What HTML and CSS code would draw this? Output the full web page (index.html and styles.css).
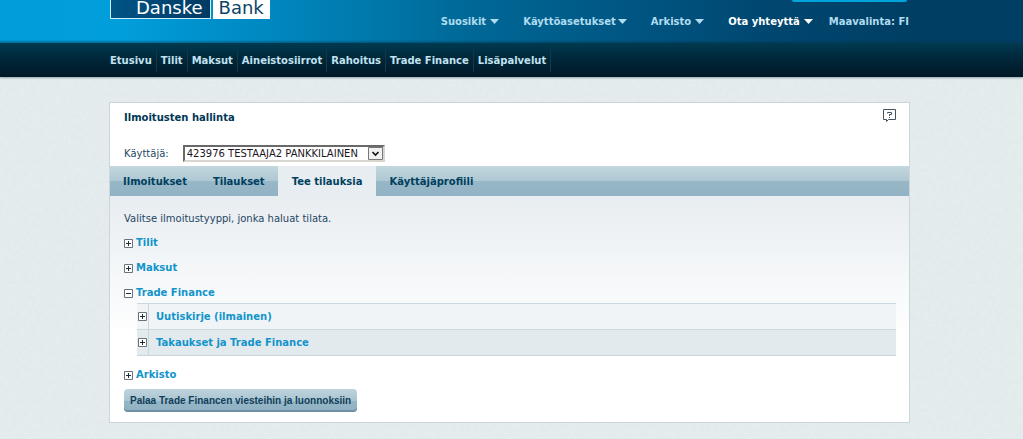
FILE: index.html
```html
<!DOCTYPE html>
<html lang="fi">
<head>
<meta charset="utf-8">
<title>Ilmoitusten hallinta</title>
<link rel="stylesheet" href="styles.css">
</head>
<body>
<svg class="sprite" width="0" height="0" aria-hidden="true">
  <symbol id="plus" viewBox="0 0 9 9"><path fill="#fff" stroke="#66737d" d="M.5.5h8v8h-8z"/><path stroke="#222b33" d="M2 4.500h5M4.500 2v5"/></symbol>
  <symbol id="minus" viewBox="0 0 9 9"><path fill="#fff" stroke="#66737d" d="M.5.5h8v8h-8z"/><path stroke="#222b33" d="M2 4.500h5"/></symbol>
  <symbol id="down" viewBox="0 0 9 5"><path d="M0 0h9L4.500 5z" fill="currentColor"/></symbol>
</svg>
<header class="top">
  <a class="logo" href="#"><span class="logo-danske">Danske</span><span class="logo-bank">Bank</span></a>
  <div class="logout"></div>
  <nav class="tools">
    <button class="tool">Suosikit<svg class="caret"><use href="#down"/></svg></button>
    <button class="tool tool-tight">Käyttöasetukset<svg class="caret"><use href="#down"/></svg></button>
    <button class="tool">Arkisto<svg class="caret"><use href="#down"/></svg></button>
    <button class="tool tool-active">Ota yhteyttä<svg class="caret"><use href="#down"/></svg></button>
    <button class="tool">Maavalinta: FI</button>
  </nav>
</header>
<nav class="menu">
  <a href="#">Etusivu</a><a href="#">Tilit</a><a href="#">Maksut</a><a href="#">Aineistosiirrot</a><a href="#">Rahoitus</a><a href="#">Trade Finance</a><a href="#">Lisäpalvelut</a>
</nav>
<main class="page">
  <section class="panel">
    <div class="panel-head">
      <h1>Ilmoitusten hallinta</h1>
      <button class="help" aria-label="Ohje">
        <svg width="13" height="13" viewBox="0 0 13 13" fill="none" stroke="#46535f"><path d="M.5.5h12v10H5.500L3.500 12.500V10.500H.5z"/><path d="M4.500 4.500v-1h4v2h-2v1.500M6 8.500h1"/></svg>
      </button>
    </div>
    <div class="user">
      <label for="user">Käyttäjä:</label>
      <span class="picker">
        <select id="user"><option>423976 TESTAAJA2 PANKKILAINEN</option></select>
        <svg class="picker-arrow" viewBox="0 0 15 13"><path d="M.5.5h14v12H.5z" fill="#f1f1f1" stroke="#777"/><path d="M4.500 5l3 3 3-3" fill="none" stroke="#111" stroke-width="1.600"/></svg>
      </span>
    </div>
    <nav class="tabs">
      <a href="#">Ilmoitukset</a><a href="#">Tilaukset</a><a class="current" href="#">Tee tilauksia</a><a href="#">Käyttäjäprofiili</a>
    </nav>
    <div class="content">
      <p>Valitse ilmoitustyyppi, jonka haluat tilata.</p>
      <ul class="tree">
        <li><button class="node"><svg class="box"><use href="#plus"/></svg>Tilit</button></li>
        <li><button class="node"><svg class="box"><use href="#plus"/></svg>Maksut</button></li>
        <li><button class="node"><svg class="box"><use href="#minus"/></svg>Trade Finance</button>
          <ul class="rows">
            <li><button class="row"><span class="row-icon"><svg class="box"><use href="#plus"/></svg></span>Uutiskirje (ilmainen)</button></li>
            <li><button class="row"><span class="row-icon"><svg class="box"><use href="#plus"/></svg></span>Takaukset ja Trade Finance</button></li>
          </ul>
        </li>
        <li><button class="node"><svg class="box"><use href="#plus"/></svg>Arkisto</button></li>
      </ul>
      <button class="back">Palaa Trade Financen viesteihin ja luonnoksiin</button>
    </div>
  </section>
</main>
</body>
</html>
```
FILE: styles.css
```css
* { box-sizing: border-box; }
body {
  margin: 0;
  background: #e2eaec url("data:image/svg+xml,%3Csvg xmlns='http://www.w3.org/2000/svg' width='240' height='240'%3E%3Cfilter id='n'%3E%3CfeTurbulence type='fractalNoise' baseFrequency='.25' numOctaves='3' stitchTiles='stitch'/%3E%3CfeColorMatrix values='0 0 0 0 1 0 0 0 0 1 0 0 0 0 1 .7 0 0 0 -.2'/%3E%3C/filter%3E%3Crect width='240' height='240' filter='url(%23n)' opacity='.4'/%3E%3C/svg%3E");
  font: 10px/16px "DejaVu Sans", Verdana, sans-serif;
  color: #1f4664;
}
button { margin: 0; padding: 0; border: 0; background: none; font: inherit; color: inherit; cursor: pointer; }
a { color: inherit; text-decoration: none; }
ul { margin: 0; padding: 0; list-style: none; }
.sprite { position: absolute; }

.top {
  position: relative;
  display: flex;
  justify-content: space-between;
  height: 43px;
  padding: 0 114px 0 110px;
  background: linear-gradient(to bottom, transparent 40px, rgba(0, 50, 75, .5)), linear-gradient(to right, #009dda 0, #009edb 12%, #0091cc 20%, #007fb4 32%, #006896 46%, #005582 62%, #004770 75%, #003e63 90%);
}
.logo { display: flex; gap: 2px; height: 19px; font-size: 18px; line-height: 16px; }
.logo-danske {
  padding: 0 7px 0 25px;
  border: 1px solid #d4ecf7;
  border-top: 0;
  background: linear-gradient(to right, #005587, #003a63);
  color: #fff;
}
.logo-bank { padding: 0 6px; background: #fff; color: #0b4467; }
.logout { position: absolute; top: 0; right: 116px; width: 115px; height: 2px; border-radius: 0 0 4px 4px; background: #00a3dc; }
.tools { display: flex; gap: 24px; align-items: center; color: #b0dcf0; font-weight: bold; }
.tool { display: flex; align-items: center; gap: 4px; white-space: nowrap; }
.tool-tight { gap: 2px; }
.tool-active { margin-right: -8px; color: #fff; }
.caret { width: 9px; height: 5px; }

.menu {
  display: flex;
  align-items: center;
  height: 34px;
  padding: 1px 110px 0;
  background: linear-gradient(#003a50, #002638 50%, #001826);
  box-shadow: 0 1px 2px #8fa3ac;
  color: #c0e2f1;
  font-weight: bold;
}
.menu a { padding: 3px 4px; border-right: 1px solid #12394b; }
.menu a:first-child { padding-left: 0; }

.page { padding: 25px 113px 16px 109px; }
.panel { border: 1px solid #cbd6da; background: #fff; }
.panel-head { display: flex; justify-content: space-between; align-items: flex-start; padding: 6px 13px 0 14px; }
h1 { margin: 0; padding-top: 1px; font-size: 10px; line-height: 16px; color: #003755; }
.help { height: 13px; }
.help svg { display: block; }
.user { display: flex; align-items: center; gap: 14px; padding: 19px 14px 4px; }
.picker { position: relative; display: flex; width: 202px; }
select {
  appearance: none;
  width: 100%;
  height: 17px;
  padding: 0 18px 0 2px;
  border: 2px solid;
  border-color: #696969 #d9d5cf #d9d5cf #696969;
  border-radius: 0;
  background: #fff;
  color: #1c1624;
  font: 10px/13px "DejaVu Sans", Verdana, sans-serif;
}
.picker-arrow { position: absolute; top: 2px; right: 2px; width: 15px; height: 13px; pointer-events: none; }
.tabs {
  display: flex;
  height: 30px;
  background: linear-gradient(#c3d7df, #aec8d3 50%, #98b7c7 51%, #91b3c4);
  color: #003f5f;
  font-weight: bold;
  line-height: 32px;
}
.tabs a { padding: 0 13px; }
.tabs .current { padding: 0 14px; background: #e8edf1; }
.content { padding: 15px 13px 10px 14px; background: linear-gradient(#e8edf1, #fff 140px); }
p { margin: 0 0 8px; }
.tree { display: flex; flex-direction: column; gap: 9px; color: #1294cb; font-weight: bold; }
.node { display: flex; align-items: center; gap: 3px; height: 16px; }
.box { display: block; width: 9px; height: 9px; }
.rows { margin: 2px 0 2px 13px; border-bottom: 1px solid #c9d5da; }
.rows li { border-top: 1px solid #c9d8de; background: #f0f4f7; }
.rows li + li { background: #e3eaed; }
.row { display: flex; align-items: center; gap: 7px; width: 100%; height: 25px; }
.row-icon { display: flex; align-items: center; justify-content: center; width: 12px; height: 100%; border-right: 1px solid #c9d8de; }
.back {
  height: 23px;
  margin-top: 6px;
  padding: 0 6px;
  border-radius: 4px;
  background: linear-gradient(#bfd3dc, #a9c5d1 50%, #94b5c5 51%, #90b2c3);
  box-shadow: inset 0 -2px #6d92a5;
  color: #103e5a;
  font: bold 10px/22px "Liberation Sans", Arial, sans-serif;
}
```
